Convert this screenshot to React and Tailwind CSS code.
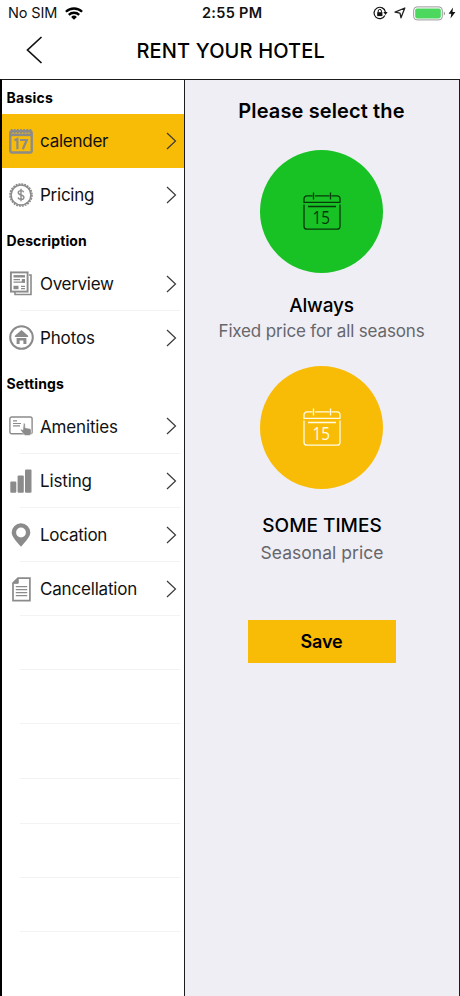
import React from "react";

const GRAY = "#8b8b8b";

function CalendarIcon() {
  return (
    <svg width="24" height="26" viewBox="0 0 24 26" fill="none">
      <rect x="1.300" y="3.300" width="21.400" height="21.200" rx="1.800" stroke={GRAY} strokeWidth="2.400" />
      <path d="M1 5.600h22v2.600H1z" fill={GRAY} />
      <path d="M2.600 1v4.600M5.700 1v4.600M8.800 1v4.600M12 1v4.600M15.200 1v4.600M18.300 1v4.600M21.400 1v4.600" stroke={GRAY} strokeWidth="1.900" />
      <path d="M5.400 12.300l3-1.300v10.200M11 12h6.800l-4 9.200" stroke={GRAY} strokeWidth="2.200" />
    </svg>
  );
}

function PricingIcon() {
  return (
    <svg width="24" height="24" viewBox="0 0 24 24" fill="none" stroke={GRAY}>
      <circle cx="12" cy="12" r="11" strokeWidth="1.600" strokeDasharray="1.900 0.980" />
      <circle cx="12" cy="12" r="9.900" strokeWidth="1.500" />
      <path d="M14.700 9.200c-.4-1-1.400-1.600-2.700-1.600-1.500 0-2.700.8-2.700 2.100 0 3 5.600 1.500 5.600 4.500 0 1.400-1.300 2.200-2.900 2.200-1.500 0-2.700-.7-3-1.900M12 5.800v12.400" strokeWidth="1.400" />
    </svg>
  );
}

function OverviewIcon() {
  return (
    <svg width="24" height="25" viewBox="0 0 24 25" fill="none" stroke={GRAY}>
      <path d="M20 4h2v19.500H6V21" strokeWidth="1.600" />
      <rect x="1.900" y="1.400" width="16.700" height="19.200" strokeWidth="1.900" />
      <path d="M4.500 5.300h11.500" strokeWidth="2.400" />
      <path d="M4.500 8.700h6.500M4.500 11.200h11.500M12 15.300h4M12 17.700h4" strokeWidth="1.200" />
      <path d="M12.800 9.700H16M4.500 16.400h5" strokeWidth="3.500" />
    </svg>
  );
}

function PhotosIcon() {
  return (
    <svg width="25" height="25" viewBox="0 0 25 25" fill="none">
      <circle cx="12.500" cy="12.500" r="11.300" stroke={GRAY} strokeWidth="2" />
      <path d="M12.500 5l6.600 5.800v1.300H5.900v-1.300z" fill={GRAY} />
      <path d="M7.600 13h9.800v6h-3v-3.600h-3.800V19h-3z" fill={GRAY} />
    </svg>
  );
}

function AmenitiesIcon() {
  return (
    <svg width="24" height="20" viewBox="0 0 24 20" fill="none">
      <rect x=".9" y="1" width="22.200" height="16.800" rx="1.800" stroke={GRAY} strokeWidth="1.400" />
      <path d="M4 4.900h4M4 7.500h8M4 9.900h7" stroke={GRAY} strokeWidth="1.200" />
      <path d="M14.500 7.200c1-.2 1.700.3 1.700 1.300v3.200l4.300.8c1.200.2 1.700.9 1.700 2v2.300c0 1.500-.9 2.700-2.200 2.700h-3c-1.200 0-1.900-.6-2.600-1.500l-3.100-4.200c.8-.9 1.800-.6 2.600.3z" fill={GRAY} stroke="#fff" strokeWidth=".5" />
    </svg>
  );
}

function ListingIcon() {
  return (
    <svg width="22" height="24" viewBox="0 0 22 24" fill={GRAY}>
      <rect x=".3" y="12.600" width="6" height="11.200" rx="1" />
      <rect x="7.600" y="6.500" width="6.200" height="17.300" rx="1" />
      <rect x="15" y=".4" width="6.500" height="23.400" rx="1" />
    </svg>
  );
}

function LocationIcon() {
  return (
    <svg width="20" height="24" viewBox="0 0 20 24">
      <path fillRule="evenodd" fill={GRAY} d="M10 .2a9.300 9.300 0 0 1 9.300 9.200c0 4-4.500 8.800-9.300 14.400C5.200 18.200.700 13.400.700 9.400A9.300 9.300 0 0 1 10 .2zm0 4.400a4.900 4.900 0 1 0 0 9.800 4.900 4.900 0 0 0 0-9.800z" />
    </svg>
  );
}

function DocumentIcon() {
  return (
    <svg width="19" height="25" viewBox="0 0 19 25" fill="none" stroke={GRAY}>
      <path d="M6 1.200h11.900v22.500H1V6.200z" strokeWidth="1.700" />
      <path d="M6.200 1v5.300H1z" fill={GRAY} strokeWidth="1" />
      <path d="M3.800 9.700h11.400M3.800 12.700h11.400M3.800 15.700h11.400M3.800 18.700h11.400" strokeWidth="1.300" />
    </svg>
  );
}

function BookingCalendar() {
  return (
    <svg width="38" height="39" viewBox="0 0 38 39" fill="none" stroke="currentColor" strokeWidth="1.300">
      <path d="M9.500 3.800H4a3 3 0 0 0-3 3v3.500h36V6.800a3 3 0 0 0-3-3h-5.500M12 3.800h14.500M10.500.6v7M27.500.6v7" />
      <path d="M1 12.500v21.700a3 3 0 0 0 3 3h30a3 3 0 0 0 3-3V12.500M5 14.500h28" />
      <text x="18.200" y="32" textAnchor="middle" fill="currentColor" stroke="none" fontSize="18.500" className="font-['Open_Sans',sans-serif] font-normal" textLength="17.500" lengthAdjust="spacingAndGlyphs">15</text>
    </svg>
  );
}

function Row({ icon, label, tracking, active }) {
  return (
    <div className={`flex h-[54.200px] items-stretch ${active ? "bg-[#f9bc06]" : ""}`}>
      <div className="flex w-[38px] shrink-0 items-center justify-center">{icon}</div>
      <div className={`flex grow items-center whitespace-nowrap pt-[2px] text-[17px] ${tracking}`}>{label}</div>
      <div className="flex w-[18px] shrink-0 items-center">
        <svg width="11" height="18" viewBox="0 0 11 18" fill="none" stroke="#3a3a3a" strokeWidth="1.200">
          <path d="M1 1l8.500 8L1 17" />
        </svg>
      </div>
    </div>
  );
}

function Line() {
  return <div className="-mt-px ml-[18px] mr-1 h-px bg-[#f3f3f3]" />;
}

function Heading({ children, tracking, height = "h-[34.500px] pt-[3px]" }) {
  return <h2 className={`flex items-center pl-[4.500px] text-[14px] font-bold text-black ${height} ${tracking}`}>{children}</h2>;
}

export default function App() {
  return (
    <div className="flex h-[996px] w-[460px] flex-col overflow-hidden bg-white font-['Inter',sans-serif] text-[#111]">
      <div className="flex h-[26px] shrink-0 items-center pl-2 pr-[4px]">
        <div className="flex w-[194px] items-center gap-[8px]">
          <span className="whitespace-nowrap text-[14.500px] tracking-[-0.150px]">No SIM</span>
          <svg width="18" height="13" viewBox="0 0 18 13" fill="none" stroke="#000" strokeWidth="2.300">
            <path d="M.9 4.800a11.600 11.600 0 0 1 16.200 0M3.800 7.900a7.400 7.400 0 0 1 10.400 0" />
            <path d="M9 12.700L6.100 9.900a4.200 4.200 0 0 1 5.800 0z" fill="#000" stroke="none" />
          </svg>
        </div>
        <span className="grow whitespace-nowrap text-[14.500px] font-semibold tracking-[0.300px]">2:55 PM</span>
        <div className="flex items-center">
          <svg width="15" height="14" viewBox="0 0 15 14" fill="none" stroke="#111">
            <path d="M11.900 9.500A5.700 5.700 0 1 1 12.400 6" strokeWidth="1.200" />
            <path d="M10.400 6.100h4.200l-2.100 2.800z" fill="#111" stroke="none" />
            <rect x="4.200" y="6.200" width="5.200" height="3.900" fill="#111" stroke="none" />
            <path d="M5.200 6.500V5a1.600 1.600 0 0 1 3.200 0v1.500" strokeWidth="1" />
          </svg>
          <svg className="ml-[6px]" width="12" height="12" viewBox="0 0 12 12" fill="none" stroke="#222" strokeWidth="1.300" strokeLinejoin="round">
            <path d="M10.800 1L7 10.800 6 6.100 1 5.200z" />
          </svg>
          <svg className="ml-[7px]" width="33" height="15" viewBox="0 0 33 15" fill="none">
            <rect x=".7" y=".9" width="28.600" height="13" rx="3.300" stroke="#999" strokeWidth="1" />
            <rect x="2.200" y="2.400" width="25.600" height="10" rx="1.800" fill="#4cd75f" />
            <path d="M30.800 5.400c1.700.6 1.700 3.400 0 4z" fill="#999" />
          </svg>
          <svg className="ml-[2px]" width="8" height="12" viewBox="0 0 8 12" fill="#111">
            <path d="M5 .5L.6 6.700h2.700L2.500 11.500 7.400 5H4.500z" />
          </svg>
        </div>
      </div>
      <header className="flex h-[53px] shrink-0 items-center">
        <svg className="ml-[26px] mt-[-6px]" width="17" height="28" viewBox="0 0 17 28" fill="none" stroke="#111" strokeWidth="1.700">
          <path d="M15.500 1L1.500 14l14 13" />
        </svg>
        <h1 className="ml-[93.500px] mt-[-4px] whitespace-nowrap text-[20px] font-medium tracking-[0.150px] text-black">RENT YOUR HOTEL</h1>
      </header>
      <main className="flex min-h-0 grow border-t border-r border-l-2 border-[#1c1c1e] border-l-black">
        <nav className="w-[181.500px] shrink-0">
          <Heading tracking="tracking-[0.250px]" height="h-[33.600px] pt-[2px]">Basics</Heading>
          <Row icon={<CalendarIcon />} label="calender" tracking="tracking-[-0.250px]" active />
          <Row icon={<PricingIcon />} label="Pricing" tracking="tracking-[-0.250px]" />
          <Heading tracking="tracking-[0.100px]">Description</Heading>
          <Row icon={<OverviewIcon />} label="Overview" tracking="tracking-[-0.300px]" />
          <Line />
          <Row icon={<PhotosIcon />} label="Photos" tracking="tracking-[-0.150px]" />
          <Heading tracking="tracking-[0.120px]">Settings</Heading>
          <Row icon={<AmenitiesIcon />} label="Amenities" tracking="tracking-[-0.150px]" />
          <Line />
          <Row icon={<ListingIcon />} label="Listing" tracking="tracking-[-0.150px]" />
          <Line />
          <Row icon={<LocationIcon />} label="Location" tracking="tracking-[-0.250px]" />
          <Line />
          <Row icon={<DocumentIcon />} label="Cancellation" tracking="tracking-[-0.180px]" />
          <Line />
          <div className="h-[54.200px]" />
          <Line />
          <div className="h-[54.200px]" />
          <Line />
          <div className="h-[54.200px]" />
          <Line />
          <div className="h-[45px]" />
          <Line />
          <div className="h-[54.200px]" />
          <Line />
          <div className="h-[54.200px]" />
          <Line />
        </nav>
        <section className="flex grow flex-col items-center border-l border-[#1c1c1e] bg-[#efeef4] pr-[0.500px] text-black">
          <h2 className="mt-[16px] h-[30px] whitespace-nowrap text-[20px] font-semibold leading-[30px] tracking-[0.120px]">Please select the</h2>
          <div className="mt-[23.600px] flex size-[123px] items-center justify-center rounded-full bg-[#18c225] text-[#07380a]">
            <BookingCalendar />
          </div>
          <h3 className="mt-[19px] h-[27px] whitespace-nowrap text-[19px] font-medium leading-[28px] tracking-[-0.200px]">Always</h3>
          <p className="h-[24px] whitespace-nowrap text-[17px] leading-[24px] tracking-[-0.160px] text-[#66666b]">Fixed price for all seasons</p>
          <div className="mt-[23px] flex size-[123px] items-center justify-center rounded-full bg-[#f9bc06] text-[#fffbe6]">
            <BookingCalendar />
          </div>
          <h3 className="mt-[23px] h-[27px] whitespace-nowrap pl-px text-[19px] font-medium leading-[28px]">SOME TIMES</h3>
          <p className="h-[27px] whitespace-nowrap pl-px text-[17.500px] leading-[27px] tracking-[0.020px] text-[#66666b]">Seasonal price</p>
          <button className="mt-[54.400px] h-[43px] w-[148px] shrink-0 bg-[#f9bc06] pt-px text-[18px] font-semibold tracking-[-0.100px]">Save</button>
        </section>
      </main>
    </div>
  );
}
